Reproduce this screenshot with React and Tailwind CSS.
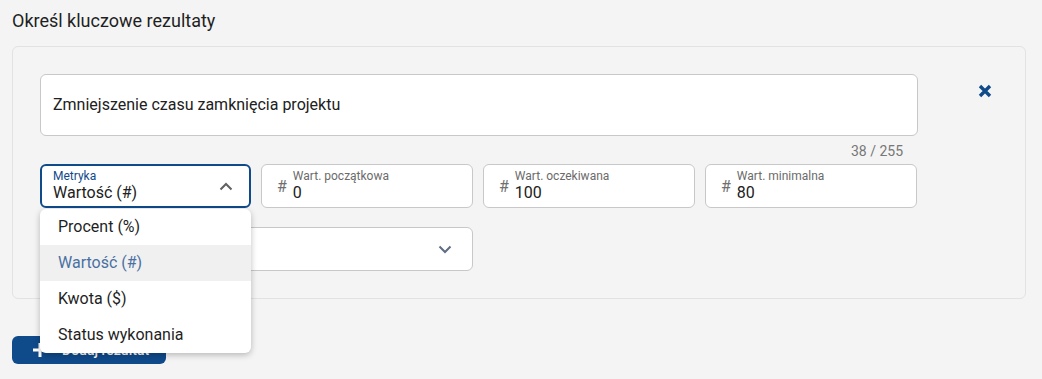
import React from 'react';

const blue = '#0f4a8a';

function NumberField({ label, value }) {
  return (
    <div className="w-[212px] h-[44px] bg-white border border-[#c8c8c8] rounded-md flex items-center pl-[15px] gap-[6px]">
      <span className="text-base text-[#6f6f6f] leading-none mt-[2px]">#</span>
      <div className="flex flex-col">
        <span className="text-xs leading-[13px] text-[#6b6b6b]">{label}</span>
        <span className="text-base leading-[19px] text-[#212121]">{value}</span>
      </div>
    </div>
  );
}

export default function App() {
  const options = ['Procent (%)', 'Wartość (#)', 'Kwota ($)', 'Status wykonania'];

  return (
    <div className="min-h-screen bg-[#f4f4f4] pl-3 pr-4 pt-[9px] font-['Roboto',sans-serif] text-[#1f1f1f]">
      <h2 className="text-[18px] leading-6">Określ kluczowe rezultaty</h2>

      {/* Key result card */}
      <div className="mt-[13px] border border-[#e2e2e2] rounded-md bg-[#f4f4f4] pl-[27px] pt-[27px] pb-[27px] flex">
        <div className="w-[878px]">
          <div className="h-[62px] bg-white border border-[#c8c8c8] rounded-md px-3 flex items-center text-base text-[#212121]">
            Zmniejszenie czasu zamknięcia projektu
          </div>
          <div className="h-[28px] pt-[5px] pr-[15px] text-right text-sm leading-5 text-[#777777]">38 / 255</div>

          <div className="flex gap-[10px]">
            {/* Metric select (open) */}
            <div className="relative w-[211px]">
              <div className="h-[44px] bg-white border-2 border-[#0f4a8a] rounded-md flex items-center pl-[11px] pr-[16px]">
                <div className="flex flex-col flex-1">
                  <span className="text-xs leading-[13px] text-[#0f4a8a]">Metryka</span>
                  <span className="text-base leading-[19px] text-[#212121]">Wartość (#)</span>
                </div>
                <svg width="14" height="9" viewBox="0 0 14 9" fill="none">
                  <path d="M1.5 7.5 L7 2 L12.5 7.5" stroke="#616161" strokeWidth="2" />
                </svg>
              </div>
              <div className="absolute left-0 top-[45px] z-10 w-[211px] bg-white rounded-md shadow-[0_2px_6px_rgba(0,0,0,0.25)] overflow-hidden">
                {options.map((o) => (
                  <div
                    key={o}
                    className={
                      o === 'Wartość (#)'
                        ? 'h-9 flex items-center pl-[18px] text-base bg-[#f0f0f0] text-[#4a70a3]'
                        : 'h-9 flex items-center pl-[18px] text-base text-[#1f1f1f]'
                    }
                  >
                    {o}
                  </div>
                ))}
              </div>
            </div>
            <NumberField label="Wart. początkowa" value="0" />
            <NumberField label="Wart. oczekiwana" value="100" />
            <NumberField label="Wart. minimalna" value="80" />
          </div>

          <div className="mt-[19px] w-[433px] h-[44px] bg-white border border-[#c8c8c8] rounded-md flex items-center justify-end pr-[20px]">
            <svg width="14" height="9" viewBox="0 0 14 9" fill="none">
              <path d="M1.5 1.5 L7 7 L12.5 1.5" stroke="#5d6d82" strokeWidth="2" />
            </svg>
          </div>
        </div>

        <div className="flex-1 pl-[57px] pt-[7px]">
          <button className="w-5 h-5 flex items-center justify-center">
            <svg width="14" height="14" viewBox="0 0 14 14" fill="none">
              <path d="M2 2 L12 12 M12 2 L2 12" stroke={blue} strokeWidth="3.4" />
            </svg>
          </button>
        </div>
      </div>

      <button className="mt-[37px] h-[28px] w-[154px] bg-[#0f4a8a] rounded-md flex items-center pl-[20px] gap-[14px] text-white text-sm font-medium">
        <svg width="16" height="16" viewBox="0 0 16 16" fill="none">
          <path d="M8 1 V15 M1 8 H15" stroke="white" strokeWidth="3" />
        </svg>
        Dodaj rezultat
      </button>
    </div>
  );
}
